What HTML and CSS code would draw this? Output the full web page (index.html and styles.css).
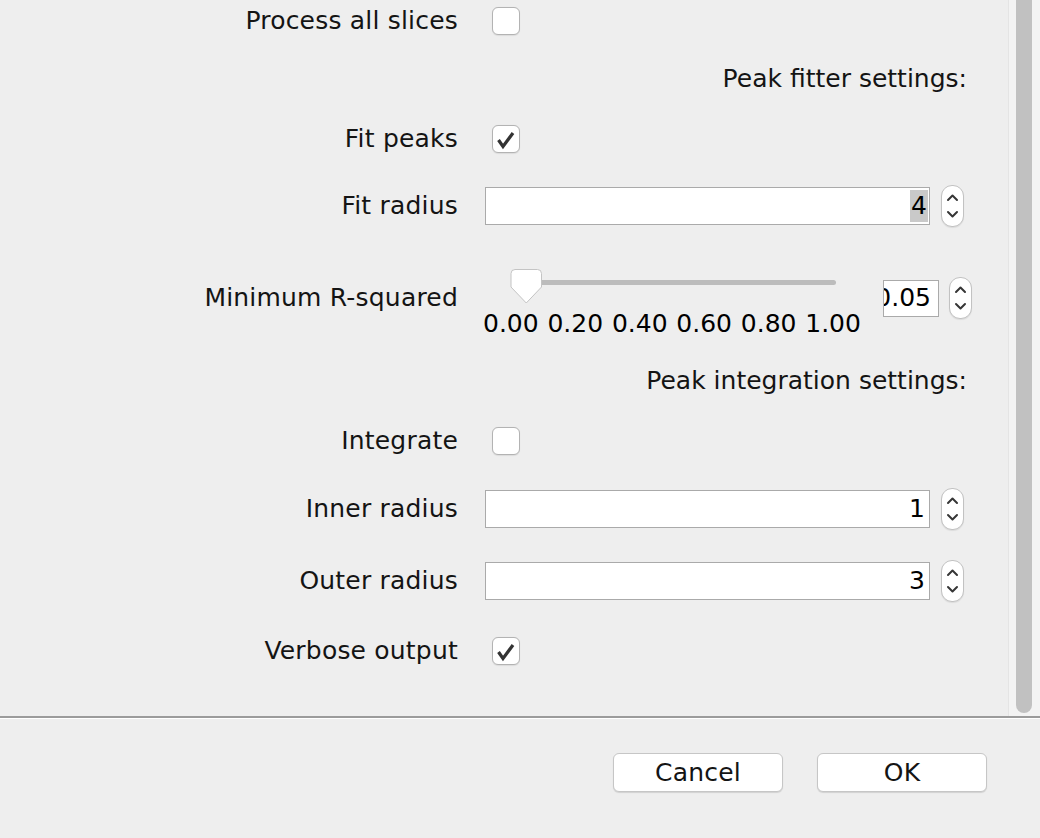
FILE: index.html
```html
<!DOCTYPE html>
<html>
<head>
<meta charset="utf-8">
<link rel="stylesheet" href="styles.css">
</head>
<body>
<div class="dialog">
  <div class="scroll-area">
    <div class="form">
      <div class="label">Process all slices</div>
      <div class="control"><div class="checkbox"></div></div>

      <div class="section">Peak fitter settings:</div>

      <div class="label">Fit peaks</div>
      <div class="control"><div class="checkbox"><svg class="check" width="28" height="28" viewBox="0 0 28 28"><path d="M6.5 15 L11 21.5 L21 8" /></svg></div></div>

      <div class="label">Fit radius</div>
      <div class="control">
        <div class="field"><span class="selected">4</span></div>
        <div class="spinner"><svg width="21" height="40" viewBox="0 0 21 40"><path d="M6 14 L10.5 9.5 L15 14" /><path d="M6 26 L10.5 30.5 L15 26" /></svg></div>
      </div>

      <div class="label">Minimum R-squared</div>
      <div class="control">
        <div class="slider">
          <div class="track"></div>
          <svg class="thumb" width="33" height="36" viewBox="0 0 33 36"><path d="M5 0.5 H27.5 Q31.5 0.5 31.5 4.5 V18 L16.25 34 L1 18 V4.5 Q1 0.5 5 0.5 Z" /></svg>
          <div class="ticks"><span>0.00</span><span>0.20</span><span>0.40</span><span>0.60</span><span>0.80</span><span>1.00</span></div>
        </div>
        <div class="value-field"><span>0.05</span></div>
        <div class="spinner spinner-small"><svg width="21" height="40" viewBox="0 0 21 40"><path d="M6 14 L10.5 9.5 L15 14" /><path d="M6 26 L10.5 30.5 L15 26" /></svg></div>
      </div>

      <div class="section">Peak integration settings:</div>

      <div class="label">Integrate</div>
      <div class="control"><div class="checkbox"></div></div>

      <div class="label">Inner radius</div>
      <div class="control">
        <div class="field"><span class="plain">1</span></div>
        <div class="spinner"><svg width="21" height="40" viewBox="0 0 21 40"><path d="M6 14 L10.5 9.5 L15 14" /><path d="M6 26 L10.5 30.5 L15 26" /></svg></div>
      </div>

      <div class="label">Outer radius</div>
      <div class="control">
        <div class="field"><span class="plain">3</span></div>
        <div class="spinner"><svg width="21" height="40" viewBox="0 0 21 40"><path d="M6 14 L10.5 9.5 L15 14" /><path d="M6 26 L10.5 30.5 L15 26" /></svg></div>
      </div>

      <div class="label">Verbose output</div>
      <div class="control"><div class="checkbox"><svg class="check" width="28" height="28" viewBox="0 0 28 28"><path d="M6.5 15 L11 21.5 L21 8" /></svg></div></div>
    </div>
    <div class="scrollbar"><div class="thumb-bar"></div></div>
  </div>
  <div class="separator"></div>
  <div class="footer">
    <button class="btn">Cancel</button>
    <button class="btn">OK</button>
  </div>
</div>
</body>
</html>
```

FILE: styles.css
```css
html, body {
  margin: 0;
  padding: 0;
  background: #eeeeee;
}

body {
  font-family: "DejaVu Sans", "Liberation Sans", sans-serif;
  font-size: 25px;
  letter-spacing: 0.2px;
  color: #141414;
  width: 1040px;
  height: 838px;
  overflow: hidden;
}

.dialog {
  display: flex;
  flex-direction: column;
  height: 838px;
}

.scroll-area {
  display: flex;
  height: 716px;
}

.form {
  flex: 1;
  min-width: 0;
  display: grid;
  grid-template-columns: 457px minmax(0, 1fr);
  grid-template-rows: 41px 76px 44px 90px 94px 72px 48px 88px 56px 84px;
  column-gap: 28px;
  padding-right: 41px;
  align-items: center;
}

.label {
  text-align: right;
  line-height: 30px;
  white-space: nowrap;
  margin-right: -1px;
}

.section {
  grid-column: 1 / span 2;
  text-align: right;
  line-height: 30px;
  white-space: nowrap;
  letter-spacing: 0;
}

.control {
  display: flex;
  align-items: center;
}

.checkbox {
  box-sizing: border-box;
  flex: none;
  width: 28px;
  height: 28px;
  margin-left: 7px;
  background: #ffffff;
  border: 1px solid #b3b3b3;
  border-radius: 6px;
  box-shadow: 0 0.5px 1px rgba(0, 0, 0, 0.08);
}

.check {
  display: block;
  margin: -1px;
}

.check path {
  fill: none;
  stroke: #333333;
  stroke-width: 3.2;
  stroke-linejoin: miter;
}

.field {
  box-sizing: border-box;
  flex: none;
  width: 445px;
  height: 38px;
  background: #ffffff;
  border: 1px solid #aaaaaa;
  display: flex;
  justify-content: flex-end;
  align-items: center;
  padding-right: 1px;
  color: #000000;
}

.selected {
  background: #c9c9c9;
  line-height: 32px;
  padding: 0 1px;
}

.plain {
  line-height: 32px;
  padding-right: 3px;
}

.spinner {
  box-sizing: border-box;
  flex: none;
  width: 23px;
  height: 42px;
  margin-left: 11px;
  background: #ffffff;
  border: 1px solid #c2c2c2;
  border-radius: 11px;
  box-shadow: 0 1px 1px rgba(0, 0, 0, 0.08);
}

.spinner svg {
  display: block;
}

.spinner path {
  fill: none;
  stroke: #363636;
  stroke-width: 2;
  stroke-linecap: round;
  stroke-linejoin: round;
}

.spinner-small {
  margin-left: 10px;
}

.slider {
  position: relative;
  flex: none;
  width: 380px;
  height: 67px;
  margin-left: -2px;
  margin-top: 9px;
}

.track {
  margin-left: 30px;
  margin-top: 11px;
  width: 323px;
  height: 5px;
  border-radius: 2.5px;
  background: #bcbcbc;
}

.thumb {
  position: absolute;
  left: 27px;
  top: -0.5px;
}

.thumb path {
  fill: #ffffff;
  stroke: #c4c4c4;
  stroke-width: 1;
}

.ticks {
  margin-top: 24px;
  width: 378px;
  display: flex;
  justify-content: space-between;
  line-height: 30px;
  letter-spacing: 0;
  color: #000000;
}

.value-field {
  box-sizing: border-box;
  flex: none;
  width: 56px;
  height: 37px;
  margin-left: 20px;
  background: #ffffff;
  border: 1px solid #aaaaaa;
  display: flex;
  justify-content: flex-end;
  align-items: center;
  padding-right: 7px;
  overflow: hidden;
  color: #000000;
  letter-spacing: 0;
}

.value-field span {
  flex: none;
  line-height: 30px;
}

.scrollbar {
  flex: none;
  width: 31px;
  height: 716px;
  background: #f3f3f3;
  border-left: 1px solid #e4e4e4;
}

.thumb-bar {
  margin-left: 7px;
  width: 16px;
  height: 713px;
  background: #c1c1c1;
  border-radius: 0 0 8px 8px;
}

.separator {
  height: 2px;
  background: #9b9b9b;
  border-bottom: 1px solid #ffffff;
}

.footer {
  display: flex;
  justify-content: flex-end;
  gap: 34px;
  padding-top: 34px;
  padding-right: 53px;
}

.btn {
  box-sizing: border-box;
  width: 170px;
  height: 39px;
  background: #ffffff;
  border: 1px solid #c6c6c6;
  border-radius: 6px;
  box-shadow: 0 1px 1px rgba(0, 0, 0, 0.12);
  font-family: "DejaVu Sans", "Liberation Sans", sans-serif;
  font-size: 25px;
  letter-spacing: 0.2px;
  color: #141414;
  padding: 0;
  line-height: 36px;
}
```
